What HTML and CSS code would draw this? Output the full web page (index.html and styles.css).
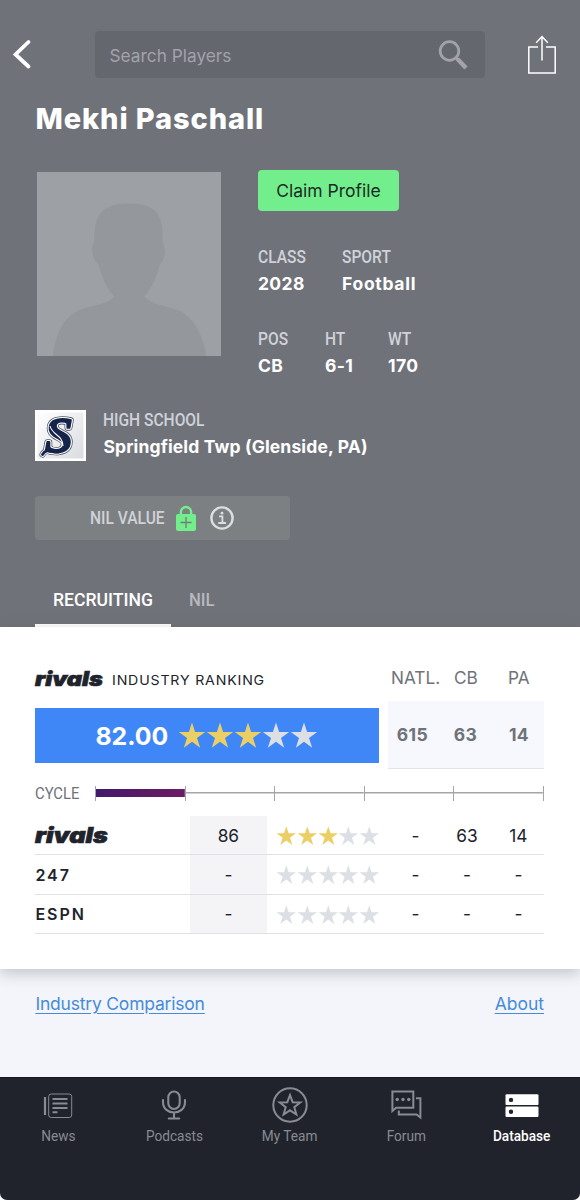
FILE: index.html
```html
<!DOCTYPE html>
<html lang="en">
<head>
<meta charset="utf-8">
<title>Mekhi Paschall</title>
<link rel="stylesheet" href="styles.css">
</head>
<body>
<svg class="defs" width="0" height="0">
  <symbol id="star" viewBox="0 0 28 28"><path d="M14 0.5L17.1 10H27.2L19 15.9L22.2 25.8L14 19.8L5.8 25.8L9 15.9L0.8 10H10.9Z"/></symbol>
</svg>
<div class="app">
  <header class="hero">
    <div class="topbar">
      <svg class="back" viewBox="0 0 20 30" width="20" height="30"><path d="M16.5 3L3.5 15.5L16.5 27.5" fill="none" stroke="#fff" stroke-width="3.8" stroke-linecap="round"/></svg>
      <div class="search">
        <span>Search Players</span>
        <svg viewBox="0 0 32 32" width="32" height="32" fill="none" stroke="#a1a3a9"><circle cx="12.5" cy="12" r="9.3" stroke-width="2.8"/><path d="M19 18.8L21.5 21.5" stroke-width="3"/><path d="M20.5 20L29 29" stroke-width="4.4"/></svg>
      </div>
      <svg class="share" viewBox="0 0 30 40" width="30" height="40" fill="none" stroke="#fff" stroke-width="1.5"><path d="M11 13H1.8V39H28.2V13H19"/><path d="M15 26.5V2.5M9.2 8.7L15 2.5L20.8 8.7"/></svg>
    </div>
    <h1 class="name">Mekhi Paschall</h1>
    <section class="profile">
      <svg class="photo" viewBox="0 0 553 553" width="184" height="184"><rect width="553" height="553" fill="#9da0a4"/><path fill="#94979b" d="M48 553C58 470 90 430 130 414C175 396 212 400 232 374C205 346 195 310 185 278C168 265 158 228 172 212C171 137 187 95 278 95C368 95 380 140 377 212C391 236 384 264 368 280C360 315 346 346 323 374C343 397 372 397 420 414C470 432 498 490 510 553Z"/></svg>
      <div class="info">
        <button class="claim">Claim Profile</button>
        <dl class="facts first">
          <div><dt>CLASS</dt><dd>2028</dd></div>
          <div><dt>SPORT</dt><dd class="sport">Football</dd></div>
        </dl>
        <dl class="facts second">
          <div><dt>POS</dt><dd>CB</dd></div>
          <div><dt>HT</dt><dd>6-1</dd></div>
          <div><dt>WT</dt><dd>170</dd></div>
        </dl>
      </div>
    </section>
    <section class="school">
      <svg viewBox="0 0 51 51" width="51" height="51">
        <defs><linearGradient id="plate" x2="1" y2="1"><stop offset="0" stop-color="#fff"/><stop offset="1" stop-color="#d9dce0"/></linearGradient></defs>
        <rect width="51" height="51" fill="#fff"/><rect x="2.5" y="2.5" width="46" height="46" fill="url(#plate)"/>
        <path d="M7.5 44.5C12 37 17 43.5 24 42" fill="none" stroke="#505663" stroke-width="6" stroke-linecap="round"/>
        <g class="crest" text-anchor="middle">
          <text x="24" y="42" stroke="#505663" stroke-width="5.6">S</text>
          <text x="24" y="42" stroke="#fff" stroke-width="4">S</text>
        </g>
        <path d="M7.5 44.5C12 37 17 43.5 24 42" fill="none" stroke="#fff" stroke-width="4.6" stroke-linecap="round"/>
        <path d="M7.5 44.5C12 37 17 43.5 24 42" fill="none" stroke="#15244b" stroke-width="2.8" stroke-linecap="round"/>
        <g class="crest" text-anchor="middle">
          <text x="24" y="42" fill="#15244b" stroke="#15244b" stroke-width="1.8">S</text>
        </g>
        <path d="M15 16C17 25 28 25 28 36" fill="none" stroke="#fff" stroke-width="1.1"/>
      </svg>
      <div class="school-text"><div class="label">HIGH SCHOOL</div><div class="school-name">Springfield Twp (Glenside, PA)</div></div>
    </section>
    <div class="nil">
      <span class="label">NIL VALUE</span>
      <svg class="lock" viewBox="0 0 20 26" width="20" height="26"><path d="M4.9 11V7.1a5.1 5.1 0 0 1 10.2 0V11" fill="none" stroke="#72ee8d" stroke-width="2.4"/><rect y="9" width="20" height="17" rx="2" fill="#72ee8d"/><path d="M10 12V23M4.5 17.5H15.5" stroke="#737b79" stroke-width="1.3"/></svg>
      <svg viewBox="0 0 24 24" width="24" height="24"><circle cx="12" cy="12" r="10.6" fill="none" stroke="#dcdee4" stroke-width="2.4"/><path d="M9 10.3H12.4V17M8.3 17H16" fill="none" stroke="#dcdee4" stroke-width="1.8"/><circle cx="12" cy="7.2" r="1.4" fill="#dcdee4"/></svg>
    </div>
    <nav class="tabs"><a class="tab active"><span>RECRUITING</span></a><a class="tab"><span>NIL</span></a></nav>
  </header>

  <main class="panel">
    <div class="rank-head">
      <svg class="rank-logo" viewBox="0 0 232 28" width="232" height="28"><text class="rivals small" x="0" y="21.5" textLength="68" lengthAdjust="spacingAndGlyphs">rivals</text><text class="industry" x="77" y="20.7" textLength="153" lengthAdjust="spacingAndGlyphs">INDUSTRY RANKING</text></svg>
      <span class="h-natl">NATL.</span><span class="h-cb">CB</span><span class="h-pa">PA</span>
    </div>
    <div class="rank-main">
      <div class="score"><b>82.00</b><span class="stars big"><svg class="on"><use href="#star"/></svg><svg class="on"><use href="#star"/></svg><svg class="on"><use href="#star"/></svg><svg><use href="#star"/></svg><svg><use href="#star"/></svg></span></div>
      <div class="ranks"><b>615</b><b>63</b><b>14</b></div>
    </div>
    <div class="cycle"><span>CYCLE</span><div class="track"><i class="fill"></i><i></i><i></i><i></i><i></i></div></div>
    <div class="rows">
      <div class="row">
        <svg class="source" viewBox="0 0 154 32" width="154" height="32"><text class="rivals" x="0" y="24.3" textLength="73" lengthAdjust="spacingAndGlyphs">rivals</text></svg>
        <span class="val">86</span>
        <span class="stars"><svg class="on"><use href="#star"/></svg><svg class="on"><use href="#star"/></svg><svg class="on"><use href="#star"/></svg><svg><use href="#star"/></svg><svg><use href="#star"/></svg></span>
        <span>-</span><span>63</span><span>14</span>
      </div>
      <div class="row">
        <span class="source">247</span><span class="val">-</span>
        <span class="stars"><svg><use href="#star"/></svg><svg><use href="#star"/></svg><svg><use href="#star"/></svg><svg><use href="#star"/></svg><svg><use href="#star"/></svg></span>
        <span>-</span><span>-</span><span>-</span>
      </div>
      <div class="row">
        <span class="source">ESPN</span><span class="val">-</span>
        <span class="stars"><svg><use href="#star"/></svg><svg><use href="#star"/></svg><svg><use href="#star"/></svg><svg><use href="#star"/></svg><svg><use href="#star"/></svg></span>
        <span>-</span><span>-</span><span>-</span>
      </div>
    </div>
  </main>

  <div class="links"><a class="compare">Industry Comparison</a><a>About</a></div>

  <footer class="bottom">
    <a class="item"><svg viewBox="0 0 36 36" width="36" height="36" fill="none" stroke="#888b93"><path d="M5 10V28" stroke-width="2.2"/><rect x="8.7" y="7" width="23" height="23.5" rx="2.5" stroke-width="1"/><path d="M12.5 12H27.5M12.5 16.5H27.5M12.5 21H27.5M12.5 25.3H17.5" stroke-width="1.9"/></svg><span>News</span></a>
    <a class="item"><svg viewBox="0 0 36 36" width="36" height="36" fill="none" stroke="#888b93" stroke-width="2.1" stroke-linecap="round"><rect x="12.3" y="4.5" width="11.4" height="17.5" rx="5.7"/><path d="M7 13V15C7 29 29 29 29 15V13M18 26V31M12.8 31.5H23.2"/></svg><span>Podcasts</span></a>
    <a class="item"><svg viewBox="0 0 36 36" width="36" height="36" fill="none" stroke="#888b93" stroke-width="2"><circle cx="18" cy="18" r="16.7"/><path d="M18 8L20.7 15.2L28.3 15.5L22.3 20.2L24.4 27.5L18 23.3L11.6 27.5L13.7 20.2L7.7 15.5L15.3 15.2Z"/></svg><span>My Team</span></a>
    <a class="item"><svg viewBox="0 0 36 36" width="36" height="36" fill="none" stroke="#888b93" stroke-width="2"><path d="M4.4 24V4.5H25.3V20.7H8.1Z" stroke-linejoin="miter"/><path d="M28 11.3H32.4V30.5L28.6 27.4H10.8V23.5"/><g fill="#888b93" stroke="none"><circle cx="9.2" cy="12.5" r="1.7"/><circle cx="15" cy="12.5" r="1.7"/><circle cx="20.8" cy="12.5" r="1.7"/></g></svg><span>Forum</span></a>
    <a class="item active"><svg viewBox="0 0 36 36" width="36" height="36"><rect x="1.5" y="7.3" width="33" height="10.8" rx="1.2" fill="#fff"/><rect x="1.5" y="19.5" width="33" height="10.5" rx="1.2" fill="#fff"/><circle cx="7" cy="12.9" r="2.2" fill="#20232b"/><circle cx="7" cy="24.7" r="2.2" fill="#20232b"/></svg><span>Database</span></a>
  </footer>
</div>
</body>
</html>
```
FILE: styles.css
```css
* { box-sizing: border-box; }
body { margin: 0; background: #fff; font-family: Inter, "Liberation Sans", sans-serif; font-size: 18px; color: #20232b; }
.defs { position: absolute; }
.app { width: 580px; height: 1200px; display: flex; flex-direction: column; background: #f3f5fa; overflow: hidden; border-radius: 0 0 7px 7px; }
h1, dl, dt, dd { margin: 0; }
svg { display: block; flex: none; overflow: visible; }

.hero { height: 627px; flex: none; background: #6f7279; padding: 31px 36px 0 35.4px; display: flex; flex-direction: column; }
.topbar { display: flex; align-items: center; height: 46px; margin: 0 -14px 0 -23.4px; }
.back { margin-right: 63px; }
.search { width: 390px; height: 47px; border-radius: 4px; background: #64676e; display: flex; align-items: center; justify-content: space-between; padding: 2px 16px 0 14.5px; color: #a1a3a9; font-size: 17.3px; }
.search svg { margin-top: -1px; }
.share { margin-left: 42px; }
.name { margin-top: 23px; font-size: 29px; line-height: 37px; height: 36px; font-weight: 800; letter-spacing: .9px; color: #fff; white-space: nowrap; }
.profile { display: flex; gap: 37px; margin-top: 34px; padding-left: 1.6px; }
.photo { margin-top: 2px; }
.claim { display: block; width: 141px; height: 41px; border: 0; border-radius: 4px; padding: 0; background: #72ee8d; color: #1c2a26; font: 17.5px/42px Inter, sans-serif; white-space: nowrap; }
.facts { display: flex; }
.first { margin-top: 34px; gap: 35px; }
.second { margin-top: 32px; }
.first > div:first-child { width: 49px; }
.second > div:first-child { width: 67px; }
.second > div:nth-child(2) { width: 63px; }
dt, .label { font-family: Roboto, "Liberation Sans", sans-serif; font-weight: 500; font-size: 17.5px; line-height: 24px; color: #d0d2d9; white-space: nowrap; transform: scaleX(.89); transform-origin: left; }
dd, .school-name { font-weight: 700; font-size: 17.5px; line-height: 25px; height: 24px; margin-top: 2px; letter-spacing: .14px; color: #fff; white-space: nowrap; }
dd { letter-spacing: .35px; }
.sport { letter-spacing: .7px; }
.school { margin-top: 33px; display: flex; gap: 17px; }
.school-text .label { line-height: 20px; }
.school-name { line-height: 26px; margin-top: 4px; }
.crest { font: italic bold 51px "Liberation Serif", serif; stroke-linejoin: round; }
.nil { margin-top: 35px; width: 255px; height: 44px; flex: none; border-radius: 4px; background: #7d8083; display: flex; align-items: center; padding-left: 55px; }
.nil .label { width: 86px; }
.nil .lock { margin-right: 14px; margin-top: -1px; }
.tabs { margin-top: 33px; display: flex; }
.tab { font: 500 18.5px/54px Roboto, sans-serif; height: 54px; padding: 0 18px; color: #b7b9be; }
.tab span { display: inline-block; transform: scaleX(.9); transform-origin: left; }
.tab.active { width: 135.5px; color: #fff; border-bottom: 3px solid #fff; }
.tab.active span { transform: scaleX(.95); }

.panel { height: 342px; flex: none; background: #fff; padding: 37px 36px 0 35.4px; display: flex; flex-direction: column; box-shadow: 0 4px 14px rgba(60, 65, 75, .28); z-index: 1; }
.rank-head { display: flex; align-items: center; height: 28px; color: #6f7279; font-size: 17.2px; line-height: 26px; }
.rank-logo { margin-right: 123.6px; }
.h-natl { width: 63px; }
.h-cb { width: 54px; }
.rivals { font: italic 900 21.5px Inter, sans-serif; fill: #20232b; stroke: #20232b; stroke-width: .7px; }
.rivals.small { font-size: 20px; }
.industry { font: 13.5px Inter, sans-serif; letter-spacing: .8px; fill: #20232b; }
.rank-main { margin-top: 9px; display: flex; justify-content: space-between; align-items: center; width: 508.6px; }
.score { width: 343.6px; height: 55px; margin-top: 1px; background: #3f87f6; display: flex; align-items: center; padding-left: 60px; color: #fff; font-size: 24.8px; }
.score b { width: 83px; }
.stars { display: flex; fill: #dcdfe3; }
.stars svg { width: 20.6px; height: 20.6px; }
.stars .on { fill: #ebcf65; }
.stars.big svg { width: 28px; height: 28px; }
.ranks { display: grid; grid-template-columns: 49px 57px 50px; height: 68px; width: 156px; align-items: center; text-align: center; background: #f6f8fd; border-bottom: 1px solid #e2e4e9; color: #6f7279; font-size: 17.5px; letter-spacing: .4px; }
.cycle { display: flex; align-items: center; margin-top: 12px; height: 24px; font: 16.5px Roboto, sans-serif; color: #6f7279; }
.cycle span { width: 60.6px; transform: scaleX(.9); transform-origin: left; }
.track { width: 449px; flex: none; height: 15px; border-left: 1.5px solid #a2a5aa; display: flex; align-items: center; }
.track i { flex: 1; height: 15px; border-right: 1.5px solid #a2a5aa; background: linear-gradient(#a2a5aa, #a2a5aa) center/100% 1.5px no-repeat; }
.track .fill { background: linear-gradient(90deg, #431969, #6d1b63) center/100% 8px no-repeat; }
.rows { margin-top: 11px; }
.row { display: grid; grid-template-columns: 154.5px 77px 123px 51px 52px 51px; align-items: center; height: 39.4px; border-bottom: 1px solid #dfe1e6; text-align: center; font-size: 17.3px; }
.row .val { height: 100%; display: grid; place-items: center; background: #f4f4f6; }
.row .stars { padding-left: 9.5px; margin-top: 2px; }
.row span.source { text-align: left; font-size: 16px; font-weight: 600; letter-spacing: 2px; }

.links { height: 108px; flex: none; display: flex; justify-content: space-between; padding: 23px 36px 0 35.4px; color: #468bd9; font-size: 17.5px; line-height: 24px; }
.links a { text-decoration: underline; text-underline-offset: 3px; }
.links .compare { letter-spacing: -.2px; }
.bottom { flex: 1; background: #20232b; border-top: 1px solid #15171c; display: flex; }
.item { width: 116px; padding-top: 9px; display: flex; flex-direction: column; align-items: center; color: #888b93; font: 15.5px/20px Roboto, sans-serif; gap: 3px; }
.item span { transform: scaleX(.88); }
.item.active { color: #fff; font-weight: 500; }
```
